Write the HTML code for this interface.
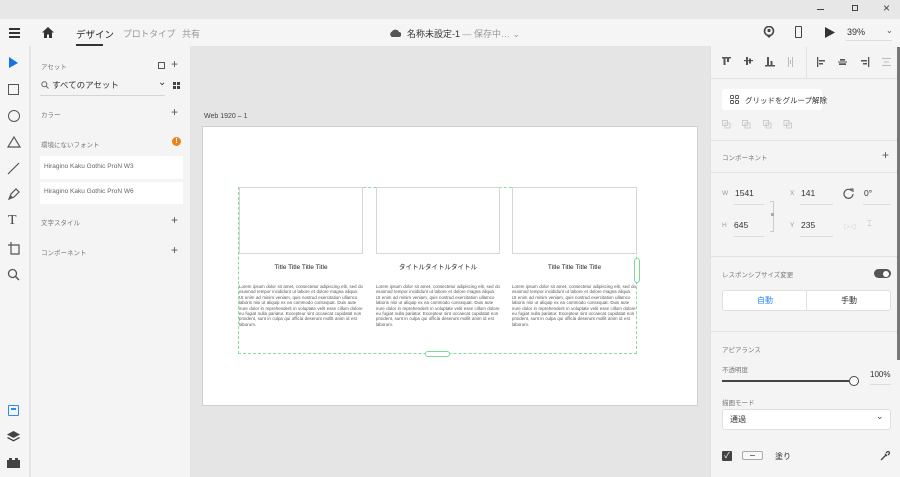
<!DOCTYPE html>
<html><head><meta charset="utf-8"><style>
*{margin:0;padding:0;box-sizing:border-box}
body{width:900px;height:477px;overflow:hidden;background:#e5e5e5;font-family:"Liberation Sans","Noto Sans CJK JP",sans-serif;position:relative;color:#333}
.a{position:absolute}
.t{position:absolute;white-space:nowrap}
.lorem{position:absolute;font-size:4.4px;line-height:5.4px;color:#555;width:124px;white-space:normal;word-spacing:0.3px}
.sep{position:absolute;height:1px;background:#e1e1e1}
.ul{position:absolute;height:1px;background:#dcdcdc}
</style></head><body>
<div class="a" style="left:0;top:0;width:900px;height:19px;background:#e7e7e7"></div>
<div class="a" style="left:817px;top:9px;width:7px;height:1px;background:#444"></div>
<div class="a" style="left:852px;top:5px;width:6px;height:6px;border:1px solid #444"></div>
<div class="t" style="left:883px;top:1px;font-size:12px;color:#444">×</div>
<div class="a" style="left:0;top:19px;width:900px;height:27px;background:#f5f5f5"></div>
<div class="a" style="left:9px;top:28px;width:11px;height:1.5px;background:#333;box-shadow:0 4px 0 #333,0 8px 0 #333"></div>
<svg class="a" style="left:42px;top:27px" width="12" height="11"><path d="M6 0L0 5.5H2V11H5V7.5H7V11H10V5.5H12Z" fill="#333"/></svg>
<div class="t" style="left:76px;top:27px;font-size:9.5px;color:#222">デザイン</div>
<div class="a" style="left:76px;top:44px;width:27px;height:2px;background:#333"></div>
<div class="t" style="left:123px;top:27px;font-size:9px;color:#999;letter-spacing:-0.3px">プロトタイプ</div>
<div class="t" style="left:182px;top:27px;font-size:9px;color:#999">共有</div>
<svg class="a" style="left:389px;top:29px" width="12" height="8"><path d="M3 8A3 3 0 0 1 3 2.5A4 4 0 0 1 10 3A2.5 2.5 0 0 1 10 8Z" fill="#555"/></svg>
<div class="t" style="left:407px;top:27px;font-size:9px;color:#333">名称未設定-1 <span style="color:#999">— 保存中… ⌄</span></div>
<svg class="a" style="left:763px;top:26px" width="12" height="12"><circle cx="6" cy="5" r="4.5" fill="none" stroke="#444" stroke-width="1.6"/><circle cx="6" cy="4.5" r="1.6" fill="#444"/><path d="M3 9L6 12L9 9" fill="#444"/></svg>
<div class="a" style="left:795px;top:26px;width:7px;height:12px;border:1.3px solid #444;border-radius:1px"></div>
<svg class="a" style="left:825px;top:27px" width="10" height="11"><path d="M0 0L10 5.5L0 11Z" fill="#333"/></svg>
<div class="t" style="left:847px;top:27px;font-size:9px;color:#333">39%</div>
<div class="ul" style="left:846px;top:40px;width:46px"></div>
<div class="t" style="left:886px;top:26px;font-size:8px;color:#555">⌄</div>
<div class="a" style="left:0;top:46px;width:29px;height:431px;background:#f5f5f5"></div>
<div class="a" style="left:29px;top:46px;width:2px;height:431px;background:#e4e4e4"></div>
<svg class="a" style="left:9px;top:57px" width="10" height="12"><path d="M0 0L9 6L0 11Z" fill="#1473e6"/></svg>
<div class="a" style="left:8px;top:84px;width:11px;height:11px;border:1.2px solid #555"></div>
<div class="a" style="left:8px;top:110px;width:12px;height:12px;border:1.2px solid #555;border-radius:50%"></div>
<svg class="a" style="left:7px;top:136px" width="14" height="12"><path d="M7 1L13 11H1Z" fill="none" stroke="#555" stroke-width="1.2"/></svg>
<svg class="a" style="left:7px;top:162px" width="13" height="13"><path d="M1 12L12 1" stroke="#555" stroke-width="1.2"/></svg>
<svg class="a" style="left:7px;top:188px" width="13" height="13"><path d="M2 11L4 6L9 1L12 4L7 9Z M2 11L5 8" fill="none" stroke="#555" stroke-width="1.2"/></svg>
<div class="t" style="left:8px;top:213px;font-size:14px;font-family:'Liberation Serif',serif;color:#444">T</div>
<svg class="a" style="left:7px;top:241px" width="14" height="14"><path d="M4 1V4H1M4 4H12V13H4V4" fill="none" stroke="#555" stroke-width="1.2"/></svg>
<svg class="a" style="left:7px;top:268px" width="13" height="13"><circle cx="5.5" cy="5.5" r="4" fill="none" stroke="#555" stroke-width="1.3"/><path d="M8.5 8.5L12 12" stroke="#555" stroke-width="1.5"/></svg>
<div class="a" style="left:8px;top:405px;width:11px;height:11px;border:1.3px solid #2d8ceb;border-radius:1px"><div class="a" style="left:2px;top:2px;width:5px;height:1.5px;background:#2d8ceb"></div></div>
<svg class="a" style="left:7px;top:431px" width="13" height="12"><path d="M6.5 0L13 3.5L6.5 7L0 3.5Z" fill="#444"/><path d="M1 6L6.5 9L12 6L13 7L6.5 10.5L0 7Z" fill="#444"/></svg>
<svg class="a" style="left:7px;top:457px" width="13" height="11"><path d="M0 3H2V1H5V3H8V1H11V3H13V11H0Z" fill="#444"/></svg>
<div class="a" style="left:31px;top:46px;width:159px;height:431px;background:#f4f4f4"></div>
<div class="t" style="left:41px;top:61px;font-size:6.5px;color:#777">アセット</div>
<div class="a" style="left:158px;top:62px;width:7px;height:7px;border:1px solid #555"></div>
<div class="t" style="left:171px;top:57px;font-size:12px;color:#555">+</div>
<svg class="a" style="left:41px;top:81px" width="8" height="8"><circle cx="3.3" cy="3.3" r="2.5" fill="none" stroke="#666"/><path d="M5 5L7.5 7.5" stroke="#666"/></svg>
<div class="t" style="left:52px;top:79px;font-size:8.5px;color:#333">すべてのアセット</div>
<div class="t" style="left:158px;top:77px;font-size:10px;color:#333">⌄</div>
<div class="a" style="left:173px;top:82px;width:7px;height:7px;background:linear-gradient(90deg,#444 3px,transparent 3px,transparent 4px,#444 4px)"><div style="position:absolute;top:3px;left:0;width:7px;height:1px;background:#f4f4f4"></div></div>
<div class="ul" style="left:40px;top:95px;width:125px;background:#d5d5d5"></div>
<div class="t" style="left:41px;top:109px;font-size:6.5px;color:#777">カラー</div>
<div class="t" style="left:171px;top:105px;font-size:12px;color:#555">+</div>
<div class="t" style="left:41px;top:139px;font-size:6.5px;color:#777">環境にないフォント</div>
<div class="a" style="left:172px;top:137px;width:9px;height:9px;border-radius:50%;background:#e68619;color:#fff;font-size:7px;font-weight:bold;text-align:center;line-height:9px">!</div>
<div class="a" style="left:40px;top:156px;width:143px;height:23px;background:#fff"></div>
<div class="t" style="left:44px;top:163px;font-size:6.5px;color:#666">Hiragino Kaku Gothic ProN W3</div>
<div class="a" style="left:40px;top:182px;width:143px;height:22px;background:#fff"></div>
<div class="t" style="left:44px;top:188px;font-size:6.5px;color:#666">Hiragino Kaku Gothic ProN W6</div>
<div class="t" style="left:41px;top:217px;font-size:6.5px;color:#777">文字スタイル</div>
<div class="t" style="left:171px;top:213px;font-size:12px;color:#555">+</div>
<div class="t" style="left:41px;top:247px;font-size:6.5px;color:#777">コンポーネント</div>
<div class="t" style="left:171px;top:243px;font-size:12px;color:#555">+</div>
<div class="t" style="left:204px;top:113px;font-size:7px;color:#444">Web 1920 – 1</div>
<div class="a" style="left:202px;top:126px;width:496px;height:280px;background:#fff;border:1px solid #cfcfcf"></div>
<div class="a" style="left:238px;top:187px;width:399px;height:167px;border:1px dashed #88dd99"></div>
<div class="a" style="left:239px;top:187px;width:124px;height:67px;border:1px solid #d6d6d6"></div>
<div class="a" style="left:376px;top:187px;width:124px;height:67px;border:1px solid #d6d6d6"></div>
<div class="a" style="left:512px;top:187px;width:125px;height:67px;border:1px solid #d6d6d6"></div>
<div class="t" style="left:239px;top:264px;width:124px;text-align:center;font-size:6.5px;color:#222">Title Title Title Title</div>
<div class="t" style="left:376px;top:264px;width:124px;text-align:center;font-size:6.5px;line-height:8px;color:#222">タイトルタイトルタイトル</div>
<div class="t" style="left:512px;top:264px;width:125px;text-align:center;font-size:6.5px;color:#222">Title Title Title Title</div>
<div class="lorem" style="left:239px;top:284px">Lorem ipsum dolor sit amet, consectetur adipiscing elit, sed do eiusmod tempor incididunt ut labore et dolore magna aliqua. Ut enim ad minim veniam, quis nostrud exercitation ullamco laboris nisi ut aliquip ex ea commodo consequat. Duis aute irure dolor in reprehenderit in voluptate velit esse cillum dolore eu fugiat nulla pariatur. Excepteur sint occaecat cupidatat non proident, sunt in culpa qui officia deserunt mollit anim id est laborum.</div>
<div class="lorem" style="left:376px;top:284px">Lorem ipsum dolor sit amet, consectetur adipiscing elit, sed do eiusmod tempor incididunt ut labore et dolore magna aliqua. Ut enim ad minim veniam, quis nostrud exercitation ullamco laboris nisi ut aliquip ex ea commodo consequat. Duis aute irure dolor in reprehenderit in voluptate velit esse cillum dolore eu fugiat nulla pariatur. Excepteur sint occaecat cupidatat non proident, sunt in culpa qui officia deserunt mollit anim id est laborum.</div>
<div class="lorem" style="left:512px;top:284px">Lorem ipsum dolor sit amet, consectetur adipiscing elit, sed do eiusmod tempor incididunt ut labore et dolore magna aliqua. Ut enim ad minim veniam, quis nostrud exercitation ullamco laboris nisi ut aliquip ex ea commodo consequat. Duis aute irure dolor in reprehenderit in voluptate velit esse cillum dolore eu fugiat nulla pariatur. Excepteur sint occaecat cupidatat non proident, sunt in culpa qui officia deserunt mollit anim id est laborum.</div>
<div class="a" style="left:634px;top:258px;width:6px;height:25px;border:1.5px solid #7ddb8e;border-radius:3px;background:#fff"></div>
<div class="a" style="left:425px;top:351px;width:25px;height:6px;border:1.5px solid #7ddb8e;border-radius:3px;background:#fff"></div>
<div class="a" style="left:710px;top:46px;width:190px;height:431px;background:#f4f4f4;border-left:1px solid #e0e0e0"></div>
<div class="a" style="left:897px;top:47px;width:3px;height:313px;background:#777"></div>
<div class="sep" style="left:711px;top:78px;width:186px"></div>
<div class="a" style="left:806px;top:47px;width:1px;height:31px;background:#e1e1e1"></div>
<svg class="a" style="left:722px;top:57px" width="170" height="12">
<g fill="#555"><rect x="0" y="0" width="9" height="1.5"/><rect x="1.5" y="1" width="2" height="7"/><rect x="5" y="1" width="2" height="4"/>
<rect x="22" y="3" width="9" height="1.2"/><rect x="24" y="0" width="2" height="8"/><rect x="27" y="1.5" width="2" height="5"/>
<rect x="43" y="8" width="10" height="1.5"/><rect x="45" y="0" width="2" height="8"/><rect x="48.5" y="4" width="2" height="4"/>
<rect x="95" y="0" width="1.3" height="10"/><rect x="97" y="3" width="6" height="1.5"/><rect x="97" y="6" width="4" height="1.5"/>
<rect x="116" y="4.5" width="9" height="1"/><rect x="118" y="2" width="5" height="1.7"/><rect x="117" y="6.3" width="7" height="1.7"/>
<rect x="146" y="0" width="1.3" height="10"/><rect x="139" y="3" width="6" height="1.5"/><rect x="141" y="6" width="4" height="1.5"/></g>
<g fill="#bbb"><rect x="66" y="0" width="1" height="10"/><rect x="70" y="0" width="1" height="10"/><rect x="68" y="3" width="1" height="4"/>
<rect x="160" y="1" width="9" height="1"/><rect x="160" y="8" width="9" height="1"/><rect x="162" y="4.5" width="5" height="1"/></g></svg>
<div class="a" style="left:722px;top:89px;width:100px;height:21px;background:#fff;border-radius:3px"></div>
<svg class="a" style="left:730px;top:95px" width="9" height="9"><g fill="none" stroke="#555" stroke-width="0.9"><rect x="0.5" y="0.5" width="3" height="3" rx="0.8"/><rect x="5.5" y="0.5" width="3" height="3" rx="0.8"/><rect x="0.5" y="5.5" width="3" height="3" rx="0.8"/><rect x="5.5" y="5.5" width="3" height="3" rx="0.8"/></g></svg>
<div class="t" style="left:745px;top:95px;font-size:7.5px;color:#333">グリッドをグループ解除</div>
<svg class="a" style="left:722px;top:120px" width="75" height="9"><g fill="none" stroke="#ccc" stroke-width="1"><rect x="0.5" y="0.5" width="5" height="5"/><rect x="3" y="3" width="5" height="5"/><rect x="20.5" y="0.5" width="5" height="5"/><rect x="23" y="3" width="5" height="5"/><rect x="41.5" y="0.5" width="5" height="5"/><rect x="44" y="3" width="5" height="5"/><rect x="62" y="0.5" width="5" height="5"/><rect x="64.5" y="3" width="5" height="5"/></g></svg>
<div class="sep" style="left:711px;top:140px;width:186px"></div>
<div class="t" style="left:722px;top:152px;font-size:6.5px;color:#777">コンポーネント</div>
<div class="t" style="left:882px;top:148px;font-size:12px;color:#555">+</div>
<div class="sep" style="left:711px;top:172px;width:186px"></div>
<div class="t" style="left:722px;top:190px;font-size:6.5px;color:#999">W</div>
<div class="t" style="left:735px;top:188px;font-size:8.5px;color:#333">1541</div>
<div class="ul" style="left:734px;top:204px;width:30px"></div>
<div class="t" style="left:790px;top:190px;font-size:6.5px;color:#999">X</div>
<div class="t" style="left:801px;top:188px;font-size:8.5px;color:#333">141</div>
<div class="ul" style="left:800px;top:204px;width:33px"></div>
<svg class="a" style="left:843px;top:188px" width="11" height="11"><path d="M9 3A4.5 4.5 0 1 0 10 6" fill="none" stroke="#555" stroke-width="1.2"/><path d="M7 1H10V4" fill="none" stroke="#555" stroke-width="1.1"/></svg>
<div class="t" style="left:864px;top:188px;font-size:8.5px;color:#333">0°</div>
<div class="ul" style="left:863px;top:204px;width:28px"></div>
<div class="a" style="left:770px;top:201px;width:4px;height:31px;border:1px solid #ccc;border-left:none"></div>
<div class="a" style="left:771px;top:213px;width:3px;height:3px;background:#aaa"></div>
<div class="t" style="left:722px;top:222px;font-size:6.5px;color:#999">H</div>
<div class="t" style="left:734px;top:220px;font-size:8.5px;color:#333">645</div>
<div class="ul" style="left:734px;top:236px;width:30px"></div>
<div class="t" style="left:790px;top:222px;font-size:6.5px;color:#999">Y</div>
<div class="t" style="left:801px;top:220px;font-size:8.5px;color:#333">235</div>
<div class="ul" style="left:800px;top:236px;width:33px"></div>
<div class="t" style="left:844px;top:222px;font-size:6px;color:#bbb">▷◁</div>
<div class="t" style="left:867px;top:219px;font-size:8px;color:#bbb">⌶</div>
<div class="sep" style="left:711px;top:256px;width:186px"></div>
<div class="t" style="left:722px;top:269px;font-size:6.5px;color:#777">レスポンシブサイズ変更</div>
<div class="a" style="left:874px;top:269px;width:17px;height:9px;border-radius:5px;background:#555"><div class="a" style="left:9px;top:1.5px;width:6px;height:6px;border-radius:50%;background:#fff"></div></div>
<div class="a" style="left:722px;top:290px;width:169px;height:21px;background:#fff;border:1px solid #e0e0e0;border-radius:3px"></div>
<div class="a" style="left:806px;top:291px;width:1px;height:19px;background:#e0e0e0"></div>
<div class="t" style="left:757px;top:295px;font-size:8px;color:#2d8ceb">自動</div>
<div class="t" style="left:841px;top:295px;font-size:8px;color:#333">手動</div>
<div class="sep" style="left:711px;top:331px;width:186px"></div>
<div class="t" style="left:722px;top:344px;font-size:6.5px;color:#777">アピアランス</div>
<div class="t" style="left:722px;top:364px;font-size:6.5px;color:#777">不透明度</div>
<div class="a" style="left:722px;top:380px;width:127px;height:1.5px;background:#444"></div>
<div class="a" style="left:849px;top:376px;width:10px;height:10px;border-radius:50%;border:1.3px solid #444;background:#fff"></div>
<div class="t" style="left:870px;top:370px;font-size:8px;color:#333">100%</div>
<div class="ul" style="left:870px;top:384px;width:21px"></div>
<div class="t" style="left:722px;top:397px;font-size:6.5px;color:#777">描画モード</div>
<div class="a" style="left:722px;top:409px;width:169px;height:21px;background:#fff;border:1px solid #e0e0e0;border-radius:3px"></div>
<div class="t" style="left:730px;top:414px;font-size:8px;color:#333">通過</div>
<div class="t" style="left:876px;top:411px;font-size:9px;color:#444">⌄</div>
<div class="a" style="left:722px;top:451px;width:10px;height:10px;background:#444;border-radius:1px;color:#fff;font-size:8px;line-height:10px;text-align:center">✓</div>
<div class="a" style="left:742px;top:451px;width:21px;height:9px;border:1px solid #aaa;border-radius:2px;background:#f8f8f8"><div class="a" style="left:7px;top:3px;width:5px;height:1px;background:#777"></div></div>
<div class="t" style="left:775px;top:451px;font-size:8px;color:#333">塗り</div>
<svg class="a" style="left:880px;top:451px" width="10" height="10"><path d="M1 9L6 4M5 3L7 5M6 2L8 0L10 2L8 4" stroke="#444" stroke-width="1.3" fill="none"/></svg>
</body></html>
